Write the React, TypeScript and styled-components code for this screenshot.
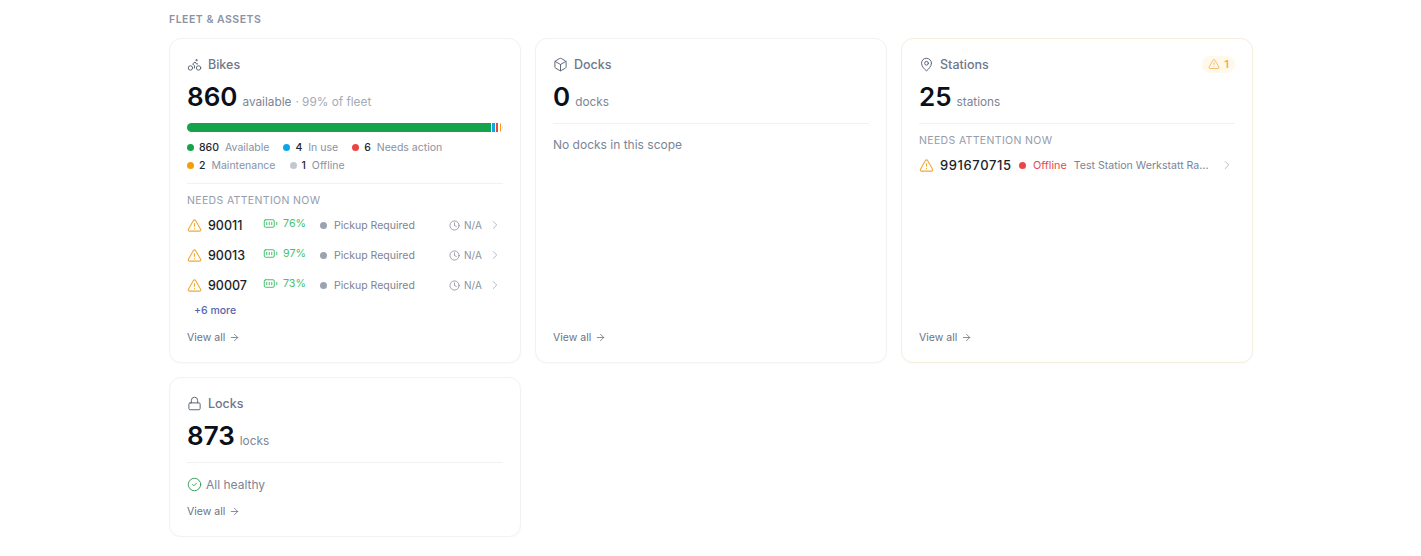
import styled, { createGlobalStyle } from 'styled-components';
import {
  ArrowRight,
  BatteryFull,
  Bike,
  Box,
  ChevronRight,
  CircleCheck,
  Clock,
  Lock,
  MapPin,
  TriangleAlert,
} from 'lucide-react';
import type { ReactNode } from 'react';

const GlobalStyle = createGlobalStyle`
  html, body {
    margin: 0;
    padding: 0;
    background: #fff;
    font-family: Inter, "Liberation Sans", sans-serif;
  }
`;

const Page = styled.div`
  width: 1084px;
  margin-left: 169px;
  padding-top: 13px;
`;

const Heading = styled.h2`
  margin: 0 0 12px;
  font-size: 10.5px;
  line-height: 13px;
  font-weight: 600;
  letter-spacing: 0.5px;
  color: #8b93a3;
`;

const Grid = styled.div`
  display: grid;
  grid-template-columns: repeat(3, 1fr);
  grid-template-rows: 325px 160px;
  gap: 14px;
  align-items: stretch;
`;

const Card = styled.section<{ $warn?: boolean }>`
  box-sizing: border-box;
  display: flex;
  flex-direction: column;
  padding: 16px 17px 17px;
  border: 1px solid ${(p) => (p.$warn ? '#f5eedd' : '#f0f2f5')};
  border-radius: 12px;
  background: #fff;
  box-shadow: 0 1px 2px rgba(17, 24, 39, 0.025);
`;

const CardHead = styled.div`
  display: flex;
  align-items: center;
  gap: 6px;
  height: 18px;
  color: #5f6879;

  svg {
    flex: none;
  }
`;

const CardTitle = styled.span`
  font-size: 12.5px;
  font-weight: 500;
  color: #6f788a;
`;

const Badge = styled.span`
  display: flex;
  align-items: center;
  gap: 4px;
  margin-left: auto;
  height: 17px;
  padding: 0 6px;
  border-radius: 9px;
  background: #fff8eb;
  color: #f0ad4e;
  font-size: 11px;
  font-weight: 600;
`;

const Stat = styled.div`
  display: flex;
  align-items: baseline;
  gap: 5px;
  margin-top: 8px;
  height: 32px;
`;

const StatValue = styled.span`
  font-size: 26px;
  line-height: 32px;
  font-weight: 600;
  color: #0b0f1a;
`;

const StatUnit = styled.span`
  font-size: 11.8px;
  color: #7b8496;
`;

const StatNote = styled.span`
  margin-left: -1px;
  font-size: 11.8px;
  color: #a4abb8;
`;

const Bar = styled.div`
  display: flex;
  gap: 1.5px;
  height: 9px;
  margin-top: 10px;
  border-radius: 5px;
  overflow: hidden;
`;

const BarPart = styled.div<{ $color: string; $grow: number }>`
  flex: ${(p) => p.$grow} 0 0;
  min-width: 1px;
  background: ${(p) => p.$color};
`;

const Legend = styled.div`
  display: flex;
  flex-wrap: wrap;
  gap: 3px 14px;
  margin-top: 8px;
  width: 290px;
`;

const LegendItem = styled.span`
  display: flex;
  align-items: center;
  height: 15px;
  font-size: 10.5px;
  color: #8a92a3;
`;

const Dot = styled.i<{ $color: string }>`
  flex: none;
  width: 7px;
  height: 7px;
  margin-right: 5px;
  border-radius: 50%;
  background: ${(p) => p.$color};
`;

const StatusDot = styled(Dot)`
  margin-right: 7px;
`;

const LegendCount = styled.b`
  margin-right: 6px;
  font-weight: 500;
  color: #1f2533;
`;

const Divider = styled.hr<{ $top: number }>`
  width: 100%;
  margin: ${(p) => p.$top}px 0 0;
  border: 0;
  border-top: 1px solid #eff1f5;
`;

const SubHeading = styled.div`
  margin-top: 10px;
  font-size: 10.5px;
  line-height: 13px;
  letter-spacing: 0.35px;
  color: #959cab;
`;

const Rows = styled.div`
  display: flex;
  flex-direction: column;
  margin-top: 3px;
`;

const Row = styled.div`
  display: flex;
  align-items: center;
  height: 30px;

  svg {
    flex: none;
  }
`;

const Warn = styled(TriangleAlert)`
  color: #f0a93b;
`;

const RowId = styled.span`
  width: 55px;
  margin-left: 6px;
  font-size: 12.5px;
  font-weight: 500;
  color: #1a1f2b;
`;

const StationId = styled(RowId)`
  width: 79px;
  font-size: 13px;
  letter-spacing: 0.6px;
`;

const Battery = styled.span`
  display: flex;
  align-items: center;
  gap: 5px;
  width: 57px;
  margin-top: -3px;
  font-size: 10.7px;
  color: #4ac06f;
`;

const StatusText = styled.span`
  width: 115px;
  font-size: 10.5px;
  color: #7d8492;
`;

const Age = styled.span`
  display: flex;
  align-items: center;
  gap: 4px;
  width: 39px;
  font-size: 10px;
  color: #8a92a3;

  svg {
    color: #747c8c;
  }
`;

const More = styled.div`
  margin: 3px 0 0 7px;
  height: 16px;
  font-size: 10.5px;
  line-height: 16px;
  font-weight: 500;
  color: #5566ad;
`;

const ViewAll = styled.a<{ $top?: number }>`
  display: flex;
  align-items: center;
  gap: 4px;
  margin-top: ${(p) => (p.$top === undefined ? 'auto' : `${p.$top}px`)};
  height: 15px;
  font-size: 10.5px;
  color: #6b7385;
`;

const EmptyText = styled.div`
  margin-top: 13px;
  font-size: 12px;
  line-height: 16px;
  color: #7b8496;
`;

const StationStatus = styled.span`
  margin-right: 7px;
  font-size: 10.8px;
  color: #e5484d;
`;

const StationName = styled.span`
  width: 136px;
  overflow: hidden;
  white-space: nowrap;
  text-overflow: ellipsis;
  font-size: 10.6px;
  color: #7b8496;
`;

const Healthy = styled.div`
  display: flex;
  align-items: center;
  gap: 4px;
  margin-top: 13px;
  height: 16px;
  font-size: 12px;
  color: #7b8496;

  svg {
    color: #2f9e57;
  }
`;

const Chevron = styled(ChevronRight)`
  color: #a9afbb;
`;

const StationChevron = styled(Chevron)`
  margin-left: 10px;
`;

const Arrow = () => <ArrowRight size={11} strokeWidth={1.75} />;

const ICON_PROPS = { size: 15, strokeWidth: 1.6 };

const legend = [
  { color: '#16a34a', count: 860, label: 'Available' },
  { color: '#0ea5e9', count: 4, label: 'In use' },
  { color: '#ef4444', count: 6, label: 'Needs action' },
  { color: '#f59e0b', count: 2, label: 'Maintenance' },
  { color: '#c4c6d0', count: 1, label: 'Offline' },
];

const bikes = [
  { id: '90011', battery: 76 },
  { id: '90013', battery: 97 },
  { id: '90007', battery: 73 },
];

function CardHeader({ icon, title, badge }: { icon: ReactNode; title: string; badge?: ReactNode }) {
  return (
    <CardHead>
      {icon}
      <CardTitle>{title}</CardTitle>
      {badge}
    </CardHead>
  );
}

export default function App() {
  return (
    <>
      <GlobalStyle />
      <Page>
        <Heading>FLEET &amp; ASSETS</Heading>
        <Grid>
          <Card>
            <CardHeader icon={<Bike {...ICON_PROPS} />} title="Bikes" />
            <Stat>
              <StatValue>860</StatValue>
              <StatUnit>available</StatUnit>
              <StatNote>· 99% of fleet</StatNote>
            </Stat>
            <Bar>
              <BarPart $color="#16a34a" $grow={303.5} />
              <BarPart $color="#0ea5e9" $grow={2.5} />
              <BarPart $color="#ef4444" $grow={2} />
              <BarPart $color="#f59e0b" $grow={1} />
              <BarPart $color="#e3e4e9" $grow={1} />
            </Bar>
            <Legend>
              {legend.map((item) => (
                <LegendItem key={item.label}>
                  <Dot $color={item.color} />
                  <LegendCount>{item.count}</LegendCount>
                  {item.label}
                </LegendItem>
              ))}
            </Legend>
            <Divider $top={10} />
            <SubHeading>NEEDS ATTENTION NOW</SubHeading>
            <Rows>
              {bikes.map((bike) => (
                <Row key={bike.id}>
                  <Warn size={15} strokeWidth={1.75} />
                  <RowId>{bike.id}</RowId>
                  <Battery>
                    <BatteryFull size={15} strokeWidth={1.6} />
                    {bike.battery}%
                  </Battery>
                  <StatusDot $color="#9ca3af" />
                  <StatusText>Pickup Required</StatusText>
                  <Age>
                    <Clock size={11} strokeWidth={1.5} />
                    N/A
                  </Age>
                  <Chevron size={14} strokeWidth={1.5} />
                </Row>
              ))}
            </Rows>
            <More>+6 more</More>
            <ViewAll>
              View all <Arrow />
            </ViewAll>
          </Card>

          <Card>
            <CardHeader icon={<Box {...ICON_PROPS} />} title="Docks" />
            <Stat>
              <StatValue>0</StatValue>
              <StatUnit>docks</StatUnit>
            </Stat>
            <Divider $top={10} />
            <EmptyText>No docks in this scope</EmptyText>
            <ViewAll>
              View all <Arrow />
            </ViewAll>
          </Card>

          <Card $warn>
            <CardHeader
              icon={<MapPin {...ICON_PROPS} />}
              title="Stations"
              badge={
                <Badge>
                  <TriangleAlert size={12} strokeWidth={1.5} />1
                </Badge>
              }
            />
            <Stat>
              <StatValue>25</StatValue>
              <StatUnit>stations</StatUnit>
            </Stat>
            <Divider $top={10} />
            <SubHeading>NEEDS ATTENTION NOW</SubHeading>
            <Rows>
              <Row>
                <Warn size={15} strokeWidth={1.75} />
                <StationId>991670715</StationId>
                <StatusDot $color="#ef4444" />
                <StationStatus>Offline</StationStatus>
                <StationName>Test Station Werkstatt Ra...</StationName>
                <StationChevron size={14} strokeWidth={1.5} />
              </Row>
            </Rows>
            <ViewAll>
              View all <Arrow />
            </ViewAll>
          </Card>

          <Card>
            <CardHeader icon={<Lock {...ICON_PROPS} />} title="Locks" />
            <Stat>
              <StatValue>873</StatValue>
              <StatUnit>locks</StatUnit>
            </Stat>
            <Divider $top={10} />
            <Healthy>
              <CircleCheck size={15} strokeWidth={1.5} />
              All healthy
            </Healthy>
            <ViewAll>
              View all <Arrow />
            </ViewAll>
          </Card>
        </Grid>
      </Page>
    </>
  );
}
